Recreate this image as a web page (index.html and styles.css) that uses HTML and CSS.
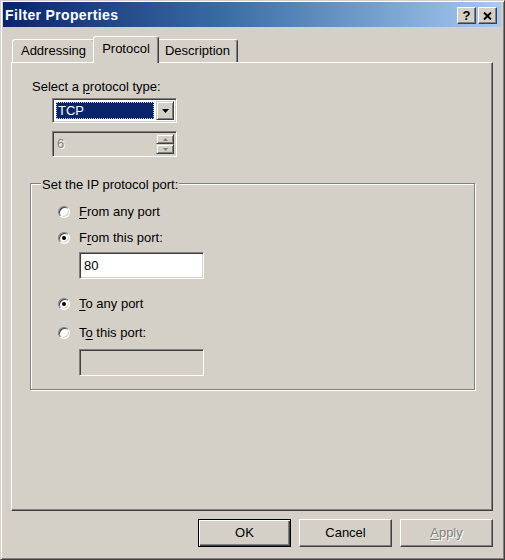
FILE: index.html
```html
<!DOCTYPE html>
<html>
<head>
<meta charset="utf-8">
<link rel="stylesheet" href="styles.css">
</head>
<body>
<div class="window">
  <div class="titlebar">
    <span class="title">Filter Properties</span>
    <div class="tbtns">
      <span class="tbtn help">?</span>
      <span class="tbtn"><svg width="9" height="8" viewBox="0 0 9 8"><path d="M1 0.5 L8 7.5 M8 0.5 L1 7.5" stroke="#000" stroke-width="2"/></svg></span>
    </div>
  </div>
  <div class="tabs">
    <div class="tab t-addr">Addressing</div>
    <div class="tab t-proto sel">Protocol</div>
    <div class="tab t-desc">Description</div>
  </div>
  <div class="panel">
    <div class="lbl">Select a <u>p</u>rotocol type:</div>
    <div class="combo">
      <span class="combo-val">TCP</span>
      <span class="combo-btn"><svg width="7" height="4" viewBox="0 0 7 4"><path d="M0 0 H7 L3.5 4 Z" fill="#000"/></svg></span>
    </div>
    <div class="spin">
      <span class="spin-val">6</span>
      <span class="spin-btns">
        <span class="sbtn"><svg width="5" height="3" viewBox="0 0 5 3"><path d="M0 3 H5 L2.5 0 Z" fill="#808080"/></svg></span>
        <span class="sbtn"><svg width="5" height="3" viewBox="0 0 5 3"><path d="M0 0 H5 L2.5 3 Z" fill="#808080"/></svg></span>
      </span>
    </div>
    <div class="group">
      <span class="legend">Set the IP protocol port:</span>
      <div class="opt"><span class="radio"></span><span><u>F</u>rom any port</span></div>
      <div class="opt o2"><span class="radio on"></span><span>F<u>r</u>om this port:</span></div>
      <div class="field f1">80</div>
      <div class="opt o3"><span class="radio on"></span><span><u>T</u>o any port</span></div>
      <div class="opt o4"><span class="radio"></span><span>T<u>o</u> this port:</span></div>
      <div class="field f2 disabled"></div>
    </div>
  </div>
  <div class="buttons">
    <div class="btn def">OK</div>
    <div class="btn">Cancel</div>
    <div class="btn dis"><span><u>A</u>pply</span></div>
  </div>
</div>
</body>
</html>
```
FILE: styles.css
```css
html, body {
  margin: 0;
  padding: 0;
  background: #d4d0c8;
}
body {
  font-family: "Liberation Sans", Arial, sans-serif;
  font-size: 13px;
  color: #000;
}
u { text-decoration: underline; text-underline-offset: 2px; }

.window {
  width: 505px;
  height: 560px;
  box-sizing: border-box;
  background: #d4d0c8;
  border: 1px solid;
  border-color: #d4d0c8 #404040 #404040 #d4d0c8;
  box-shadow: inset 1px 1px #fff, inset -1px -1px #808080;
  padding: 1px 3px 2px 2px;
  display: flex;
  flex-direction: column;
}

.titlebar {
  height: 25px;
  flex: none;
  background: linear-gradient(to right, #0a246a 0%, #3a6ea5 45%, #a6caf0 100%);
  display: flex;
  align-items: center;
  justify-content: space-between;
  padding: 0 4px 0 2px;
}
.title {
  color: #fff;
  font-weight: bold;
  font-size: 14px;
  letter-spacing: 0.35px;
  line-height: 16px;
  margin-top: 1px;
}
.tbtns {
  display: flex;
  gap: 2px;
  margin-top: 2px;
}
.tbtn {
  width: 19px;
  height: 17px;
  box-sizing: border-box;
  background: #d4d0c8;
  border: 1px solid;
  border-color: #fff #404040 #404040 #fff;
  box-shadow: inset -1px -1px #808080;
  display: flex;
  align-items: center;
  justify-content: center;
}
.tbtn.help {
  font-weight: bold;
  font-size: 13px;
  line-height: 13px;
}

.tabs {
  flex: none;
  display: flex;
  align-items: flex-end;
  height: 26px;
  margin: 9px 8px 0 9px;
  position: relative;
  z-index: 1;
}
.tab {
  height: 23px;
  box-sizing: border-box;
  background: #d4d0c8;
  border: 1px solid;
  border-bottom: none;
  border-color: #fff #404040 transparent #fff;
  border-radius: 3px 3px 0 0;
  box-shadow: inset -1px 0 #808080;
  display: flex;
  align-items: center;
  justify-content: center;
  line-height: 16px;
}
.t-addr { width: 83px; }
.t-proto { width: 62px; }
.t-desc { width: 81px; }
.tab.sel {
  width: 66px;
  height: 27px;
  margin: 0 -2px -1px -2px;
  padding-bottom: 2px;
  position: relative;
  z-index: 2;
}
.t-addr { position: relative; z-index: 0; }

.panel {
  flex: none;
  height: 449px;
  box-sizing: border-box;
  margin: 0 8px;
  border: 1px solid;
  border-color: #fff #404040 #404040 #fff;
  box-shadow: inset -1px -1px #808080;
  padding: 16px 0 0 18px;
}
.lbl {
  line-height: 16px;
  margin-left: 2px;
}

.combo {
  width: 125px;
  height: 25px;
  box-sizing: border-box;
  margin: 3px 0 0 22px;
  background: #fff;
  border: 1px solid;
  border-color: #808080 #fff #fff #808080;
  box-shadow: inset 1px 1px #404040, inset -1px -1px #d4d0c8;
  padding: 2px 2px 2px 3px;
  display: flex;
  gap: 2px;
}
.combo-val {
  flex: 1;
  background: #0a246a;
  color: #fff;
  outline: 1px dotted #c8c8ff;
  outline-offset: -1px;
  line-height: 17px;
  padding-left: 2px;
  margin: 1px 0;
}
.combo-btn, .sbtn {
  background: #d4d0c8;
  box-sizing: border-box;
  border: 1px solid;
  border-color: #d4d0c8 #404040 #404040 #d4d0c8;
  box-shadow: inset 1px 1px #fff, inset -1px -1px #808080;
  display: flex;
  align-items: center;
  justify-content: center;
}
.combo-btn { width: 18px; }

.spin {
  width: 125px;
  height: 26px;
  box-sizing: border-box;
  margin: 8px 0 0 22px;
  background: #d4d0c8;
  border: 1px solid;
  border-color: #808080 #fff #fff #808080;
  box-shadow: inset 1px 1px #404040, inset -1px -1px #d4d0c8;
  padding: 2px 2px 2px 4px;
  display: flex;
}
.spin-val {
  flex: 1;
  color: #808080;
  text-shadow: 1px 1px #fff;
  line-height: 20px;
}
.spin-btns {
  width: 18px;
  display: flex;
  flex-direction: column;
}
.sbtn { flex: 1; }

.group {
  position: relative;
  width: 445px;
  height: 207px;
  box-sizing: border-box;
  margin-top: 26px;
  border: 1px solid #808080;
  box-shadow: 1px 1px 0 #fff, inset 1px 1px 0 #fff;
  padding: 18px 0 0 27px;
}
.legend {
  position: absolute;
  left: 10px;
  top: -7px;
  line-height: 16px;
  padding: 0 1px;
  background: #d4d0c8;
}
.opt {
  display: flex;
  align-items: center;
  gap: 9px;
  height: 20px;
  line-height: 16px;
}
.o2 { margin-top: 6px; }
.o3 { margin-top: 15px; }
.o4 { margin-top: 9px; }
.radio {
  width: 12px;
  height: 12px;
  box-sizing: border-box;
  border-radius: 50%;
  background: #fff;
  border: 1px solid;
  border-color: #808080 #fff #fff #808080;
  box-shadow: inset 1px 1px #404040, inset -1px -1px #d4d0c8;
  display: flex;
  align-items: center;
  justify-content: center;
}
.radio.on::after {
  content: "";
  width: 4px;
  height: 4px;
  border-radius: 50%;
  background: #000;
}
.field {
  width: 125px;
  height: 27px;
  box-sizing: border-box;
  margin-left: 21px;
  background: #fff;
  border: 1px solid;
  border-color: #808080 #fff #fff #808080;
  box-shadow: inset 1px 1px #404040, inset -1px -1px #d4d0c8;
  padding: 0 4px;
  line-height: 25px;
}
.f1 { margin-top: 4px; }
.f2 { margin-top: 6px; }
.field.disabled { background: #d4d0c8; }

.buttons {
  flex: none;
  display: flex;
  justify-content: flex-end;
  gap: 8px;
  margin-top: 8px;
  padding-right: 8px;
}
.btn {
  width: 93px;
  height: 28px;
  box-sizing: border-box;
  border: 1px solid;
  border-color: #fff #404040 #404040 #fff;
  box-shadow: inset -1px -1px #808080, inset 1px 1px #d4d0c8;
  display: flex;
  align-items: center;
  justify-content: center;
  line-height: 16px;
}
.btn.def {
  border-color: #000;
  box-shadow: inset 1px 1px #fff, inset -1px -1px #404040, inset -2px -2px #808080;
}
.btn.dis {
  color: #808080;
  text-shadow: 1px 1px #fff;
}
```
